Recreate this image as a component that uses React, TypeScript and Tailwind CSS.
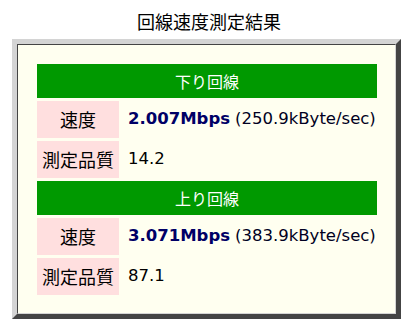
import React from 'react'

type Line = {
  title: string
  mbps: string
  kbyte: string
  quality: string
}

const lines: Line[] = [
  { title: '下り回線', mbps: '2.007Mbps', kbyte: '(250.9kByte/sec)', quality: '14.2' },
  { title: '上り回線', mbps: '3.071Mbps', kbyte: '(383.9kByte/sec)', quality: '87.1' },
]

const jp = "font-['Noto_Sans_CJK_JP',sans-serif]"
const latin = "font-['DejaVu_Sans','Noto_Sans_CJK_JP',sans-serif]"

export default function App() {
  return (
    <main className={`min-h-screen w-[418px] bg-white text-black ${jp}`}>
      <h1 className="pt-[8px] pb-[4px] text-center text-[18px] leading-[27px] font-normal">
        回線速度測定結果
      </h1>

      {/* ridge-style frame: light top/left outside, dark line inside */}
      <div className="ml-[12px] w-[389px] border-[5px] border-t-[#d4d4d4] border-l-[#d4d4d4] border-r-[#444444] border-b-[#444444]">
        <div className="border border-t-[#444444] border-l-[#444444] border-r-[#d4d4d4] border-b-[#d4d4d4] bg-[#fffff0] pt-[19px] pb-[18px] pl-[19px] pr-[18px]">
          <div className="grid grid-cols-[82px_1fr] gap-[3px]">
            {lines.map((line) => (
              <React.Fragment key={line.title}>
                <div className="col-span-2 flex h-[34px] items-center justify-center bg-[#009900] text-[16px] text-white">
                  {line.title}
                </div>

                <div className="flex h-[37px] items-center justify-center bg-[#ffdfdf] text-[18px]">
                  速度
                </div>
                <div className={`flex items-center pl-[6px] text-[16.5px] whitespace-nowrap ${latin}`}>
                  <span className="font-bold text-[#000066]">{line.mbps}</span>
                  <span className="ml-[5px] text-[#000022]">{line.kbyte}</span>
                </div>

                <div className="flex h-[37px] items-center justify-center bg-[#ffdfdf] text-[18px]">
                  測定品質
                </div>
                <div className={`flex items-center pl-[6px] text-[16.5px] ${latin}`}>
                  {line.quality}
                </div>
              </React.Fragment>
            ))}
          </div>
        </div>
      </div>
    </main>
  )
}
